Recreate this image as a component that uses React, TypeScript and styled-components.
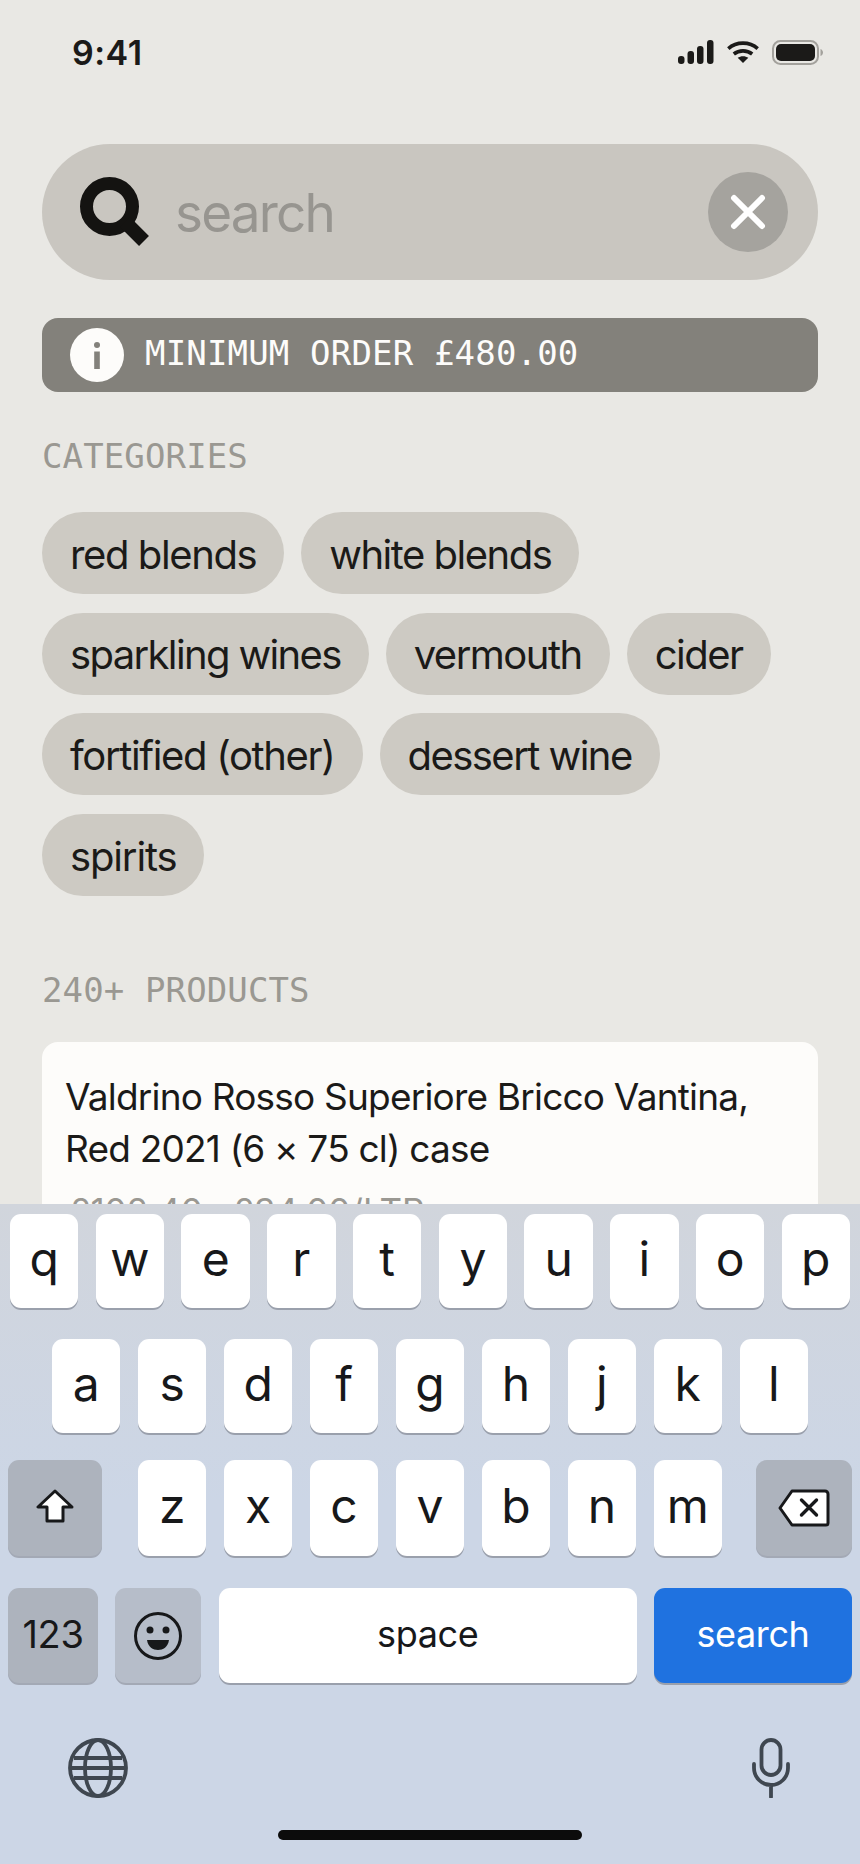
import styled, { createGlobalStyle } from 'styled-components';

const GlobalStyle = createGlobalStyle`
  html, body {
    margin: 0;
    padding: 0;
    background: #e9e8e4;
  }
`;

const sans = `Inter, "Liberation Sans", sans-serif`;
const mono = `"DejaVu Sans Mono", "Liberation Mono", monospace`;

const Screen = styled.div`
  position: relative;
  width: 860px;
  height: 1864px;
  overflow: hidden;
  background: #e9e8e4;
  font-family: ${sans};
  color: #1b1a18;
`;

const StatusBar = styled.div`
  display: flex;
  justify-content: space-between;
  align-items: center;
  height: 104px;
  padding: 0 36px 0 72px;
`;

const Clock = styled.div`
  font-size: 34px;
  font-weight: 600;
  letter-spacing: 0.5px;
`;

const StatusIcons = styled.div`
  display: flex;
  align-items: center;
  gap: 13px;
`;

const Content = styled.main`
  padding: 40px 42px 0;
`;

const SearchBar = styled.div`
  display: flex;
  align-items: center;
  height: 136px;
  padding: 0 30px 0 38px;
  border-radius: 68px;
  background: #c9c6c0;
`;

const SearchPlaceholder = styled.div`
  flex: 1;
  margin-left: 25px;
  padding-top: 1px;
  font-size: 53px;
  letter-spacing: -1.8px;
  color: #979590;
`;

const ClearButton = styled.div`
  display: flex;
  align-items: center;
  justify-content: center;
  width: 80px;
  height: 80px;
  border-radius: 50%;
  background: #a5a39e;
`;

const Notice = styled.div`
  display: flex;
  align-items: center;
  gap: 21px;
  height: 74px;
  margin-top: 38px;
  padding-left: 28px;
  border-radius: 16px;
  background: #83817b;
  font-family: ${mono};
  font-size: 34px;
  letter-spacing: 0.17px;
  color: #fdfcfa;
`;

const NoticeText = styled.span`
  padding-bottom: 4px;
`;

const InfoDot = styled.div`
  display: flex;
  align-items: center;
  justify-content: center;
  width: 54px;
  height: 54px;
  border-radius: 50%;
  background: #fdfcfa;
`;

const SectionTitle = styled.h2<{ $top: number }>`
  margin: ${(p) => p.$top}px 0 0;
  font-family: ${mono};
  font-size: 34px;
  font-weight: 400;
  line-height: 40px;
  letter-spacing: 0.12px;
  color: #9a9892;
`;

const Chips = styled.div`
  display: flex;
  flex-wrap: wrap;
  gap: 18.7px 17px;
  margin-top: 36px;
`;

const Chip = styled.div<{ $tracking: number }>`
  display: flex;
  align-items: center;
  box-sizing: border-box;
  height: 82px;
  padding: 2px 28px 0;
  border-radius: 41px;
  background: #cdcac3;
  font-size: 40px;
  letter-spacing: ${(p) => p.$tracking}px;
`;

const ProductCard = styled.article`
  margin-top: 32px;
  padding: 29px 23px;
  border-radius: 16px;
  background: #fdfcfa;
`;

const ProductName = styled.div`
  font-size: 37px;
  line-height: 52px;
  letter-spacing: -0.8px;
`;

const ProductPrice = styled.div`
  margin-top: 15px;
  padding-left: 4px;
  font-size: 35px;
  color: #9a9892;
`;

const Keyboard = styled.div`
  position: absolute;
  left: 0;
  right: 0;
  bottom: 0;
  height: 660px;
  padding-top: 10px;
  box-sizing: border-box;
  background: linear-gradient(#d1d5dc, #ccd6e6 45%);
`;

const KeyRow = styled.div<{ $inset?: number; $height?: number; $after?: number }>`
  display: flex;
  justify-content: space-between;
  height: ${(p) => p.$height ?? 94}px;
  margin-bottom: ${(p) => p.$after ?? 0}px;
  padding: 0 ${(p) => p.$inset ?? 8}px;
`;

type KeyTone = 'light' | 'dark' | 'muted' | 'blue';

const keyBackground: Record<KeyTone, string> = {
  light: '#ffffff',
  dark: '#adb3bd',
  muted: '#b6bdc9',
  blue: '#1f72e0',
};

const Key = styled.div<{ $width?: number; $tone?: KeyTone }>`
  display: flex;
  flex: ${(p) => (p.$width ? `0 0 ${p.$width}px` : '0 0 68.4px')};
  align-items: center;
  justify-content: center;
  box-sizing: border-box;
  border-radius: 11px;
  background: ${(p) => keyBackground[p.$tone ?? 'light']};
  box-shadow: 0 2px 0 ${(p) => (p.$tone === 'dark' || p.$tone === 'muted' ? '#a3a9b5' : '#9aa0ac')};
  color: ${(p) => (p.$tone === 'blue' ? '#ffffff' : '#17181a')};
`;

const LetterKey = styled(Key)`
  padding-bottom: 5px;
  font-size: 48px;
`;

const SmallLabel = styled.span`
  padding-bottom: 4px;
  font-size: 36px;
  letter-spacing: -0.4px;
`;

const NumberLabel = styled.span`
  padding-bottom: 4px;
  font-size: 38px;
  letter-spacing: -0.4px;
`;

const LetterGroup = styled.div`
  display: flex;
  justify-content: space-between;
  flex: 0 0 584px;
  margin-left: 2px;
`;

const BottomIcons = styled.div`
  display: flex;
  justify-content: space-between;
  align-items: center;
  height: 60px;
  margin-top: 55px;
  padding: 0 70px 0 68px;
`;

const HomeBar = styled.div`
  width: 304px;
  height: 10px;
  margin: 32px auto 0;
  border-radius: 5px;
  background: #0c0c0c;
`;

const categories = [
  { name: 'red blends', tracking: -1.4 },
  { name: 'white blends', tracking: -1.5 },
  { name: 'sparkling wines', tracking: -1.65 },
  { name: 'vermouth', tracking: -1.5 },
  { name: 'cider', tracking: -1.5 },
  { name: 'fortified (other)', tracking: -1.35 },
  { name: 'dessert wine', tracking: -1.55 },
  { name: 'spirits', tracking: -1.15 },
];

const SignalIcon = () => (
  <svg width="36" height="24" viewBox="0 0 36 24" fill="#1b1a18">
    <rect x="0" y="16" width="6.5" height="8" rx="3" />
    <rect x="9.5" y="11" width="6.5" height="13" rx="3" />
    <rect x="19" y="6" width="6.5" height="18" rx="3" />
    <rect x="29" y="0" width="6.5" height="24" rx="3" />
  </svg>
);

const WifiIcon = () => (
  <svg width="32" height="22" viewBox="0 0 32 22" fill="none" stroke="#1b1a18" strokeWidth="3.6">
    <path d="M1.3 7.6C9.5 .3 22.5 .3 30.7 7.6" />
    <path d="M6.8 13C12 8.8 20 8.8 25.2 13" />
    <path d="M16 22l-5.3-5.2c3-2.2 7.6-2.2 10.6 0z" fill="#1b1a18" stroke="none" />
  </svg>
);

const BatteryIcon = () => (
  <svg width="52" height="25" viewBox="0 0 52 25">
    <rect x="1" y="1" width="45" height="23" rx="7.5" fill="none" stroke="#a3a19c" strokeWidth="2" />
    <rect x="4" y="4" width="39" height="17" rx="5" fill="#1b1a18" />
    <path d="M48.5 9c1.5.5 2.5 2 2.5 3.5s-1 3-2.5 3.5z" fill="#a3a19c" />
  </svg>
);

const SearchIcon = () => (
  <svg width="70" height="70" viewBox="0 0 70 70" fill="none" stroke="#141311" strokeWidth="13">
    <circle cx="29.5" cy="29.5" r="23" />
    <path d="M45 45l19 19" strokeWidth="14" />
  </svg>
);

const CloseIcon = () => (
  <svg width="38" height="38" viewBox="0 0 38 38" fill="none" stroke="#ffffff" strokeWidth="6" strokeLinecap="round">
    <path d="M5 5l28 28M33 5L5 33" />
  </svg>
);

const InfoGlyph = () => (
  <svg width="8" height="27" viewBox="0 0 8 27" fill="#83817b">
    <circle cx="4" cy="3" r="3" />
    <rect x="1.2" y="9.5" width="5.6" height="17.5" />
  </svg>
);

const ShiftIcon = () => (
  <svg width="38" height="34" viewBox="0 0 38 34" fill="#ffffff" stroke="#17181a" strokeWidth="3" strokeLinejoin="round">
    <path d="M19 2L2 18h9v14h16V18h9z" />
  </svg>
);

const BackspaceIcon = () => (
  <svg width="52" height="38" viewBox="0 0 52 38" fill="#ffffff" stroke="#17181a" strokeWidth="3" strokeLinejoin="round">
    <path d="M14 2h33a3 3 0 0 1 3 3v29a2 2 0 0 1-2 2H14L2 19z" />
    <path d="M23.5 11l15 15M38.5 11l-15 15" fill="none" strokeWidth="3.4" strokeLinecap="round" />
  </svg>
);

const EmojiIcon = () => (
  <svg width="50" height="50" viewBox="0 0 50 50">
    <circle cx="25" cy="25" r="22.5" fill="none" stroke="#17181a" strokeWidth="3" />
    <circle cx="17" cy="19" r="3.5" fill="#17181a" />
    <circle cx="33" cy="19" r="3.5" fill="#17181a" />
    <path d="M14 29h22c-1 7-6 10-11 10s-10-3-11-10z" fill="#17181a" />
  </svg>
);

const GlobeIcon = () => (
  <svg width="60" height="60" viewBox="0 0 60 60" fill="none" stroke="#3f4750" strokeWidth="3.8">
    <circle cx="30" cy="30" r="28" />
    <ellipse cx="30" cy="30" rx="13" ry="28" />
    <path d="M6 20h48M2 30h56M6 40h48" />
  </svg>
);

const MicIcon = () => (
  <svg width="38" height="60" viewBox="0 0 38 60" fill="none" stroke="#3f4750" strokeWidth="3.8" strokeLinecap="round">
    <rect x="9.5" y="2" width="19" height="35" rx="9.5" />
    <path d="M2 26v4a17 17 0 0 0 34 0v-4M19 47v12" />
  </svg>
);

const topRow = ['q', 'w', 'e', 'r', 't', 'y', 'u', 'i', 'o', 'p'];
const middleRow = ['a', 's', 'd', 'f', 'g', 'h', 'j', 'k', 'l'];
const bottomRow = ['z', 'x', 'c', 'v', 'b', 'n', 'm'];

export default function App() {
  return (
    <>
      <GlobalStyle />
      <Screen>
        <StatusBar>
          <Clock>9:41</Clock>
          <StatusIcons>
            <SignalIcon />
            <WifiIcon />
            <BatteryIcon />
          </StatusIcons>
        </StatusBar>

        <Content>
          <SearchBar>
            <SearchIcon />
            <SearchPlaceholder>search</SearchPlaceholder>
            <ClearButton>
              <CloseIcon />
            </ClearButton>
          </SearchBar>

          <Notice>
            <InfoDot>
              <InfoGlyph />
            </InfoDot>
            <NoticeText>MINIMUM ORDER £480.00</NoticeText>
          </Notice>

          <SectionTitle $top={44}>CATEGORIES</SectionTitle>
          <Chips>
            {categories.map((c) => (
              <Chip key={c.name} $tracking={c.tracking}>{c.name}</Chip>
            ))}
          </Chips>

          <SectionTitle $top={74}>240+ PRODUCTS</SectionTitle>
          <ProductCard>
            <ProductName>
              Valdrino Rosso Superiore Bricco Vantina,
              <br />
              Red 2021 (6 × 75 cl) case
            </ProductName>
            <ProductPrice>£102.40 · £34.00/LTR</ProductPrice>
          </ProductCard>
        </Content>

        <Keyboard>
          <KeyRow $inset={10} $after={31}>
            {topRow.map((k) => (
              <LetterKey key={k}>{k}</LetterKey>
            ))}
          </KeyRow>
          <KeyRow $inset={52} $after={27}>
            {middleRow.map((k) => (
              <LetterKey key={k}>{k}</LetterKey>
            ))}
          </KeyRow>
          <KeyRow $height={96} $after={32}>
            <LetterKey $width={94} $tone="dark">
              <ShiftIcon />
            </LetterKey>
            <LetterGroup>
              {bottomRow.map((k) => (
                <LetterKey key={k}>{k}</LetterKey>
              ))}
            </LetterGroup>
            <Key $width={96} $tone="dark">
              <BackspaceIcon />
            </Key>
          </KeyRow>
          <KeyRow $height={95}>
            <Key $width={90} $tone="dark">
              <NumberLabel>123</NumberLabel>
            </Key>
            <Key $width={86} $tone="muted">
              <EmojiIcon />
            </Key>
            <Key $width={418}>
              <SmallLabel>space</SmallLabel>
            </Key>
            <Key $width={198} $tone="blue">
              <SmallLabel>search</SmallLabel>
            </Key>
          </KeyRow>
          <BottomIcons>
            <GlobeIcon />
            <MicIcon />
          </BottomIcons>
          <HomeBar />
        </Keyboard>
      </Screen>
    </>
  );
}
